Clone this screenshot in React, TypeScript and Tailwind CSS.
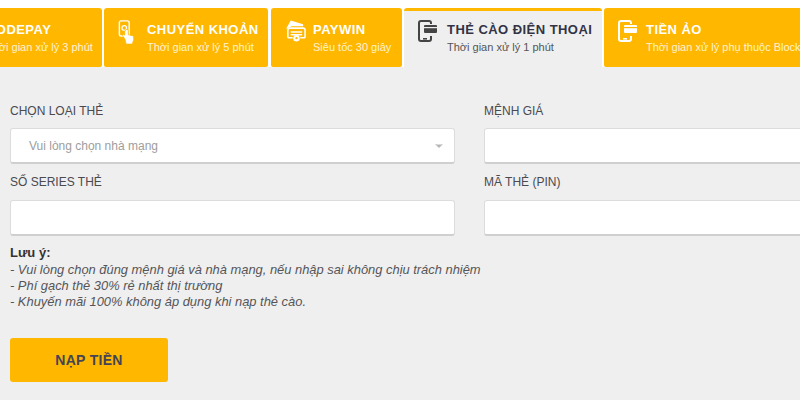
import { ChevronDown } from "lucide-react"

const font = "font-['Liberation_Sans',Arial,sans-serif]"

function HandIcon() {
    return (
        <svg width="17" height="25" viewBox="0 0 18 28" fill="none">
            <rect x="1" y="1" width="11" height="17" rx="2" stroke="#fff" strokeWidth="1.6" />
            <circle cx="6.5" cy="9" r="2.6" stroke="#fff" strokeWidth="1.4" />
            <path d="M7 12v5l-1.5-1-1 1 3 5 1 5h7l1.5-5v-4l-6-1.5V12a1.2 1.2 0 0 0-3 0Z" fill="#fff" stroke="#ffb700" strokeWidth="0.8" />
        </svg>
    )
}

function WalletIcon() {
    return (
        <svg width="21" height="24" viewBox="0 0 22 24" fill="none">
            <path d="M1 10 6 1l13 4v2H7Z" fill="#fff" />
            <path d="M3 19V11a2 2 0 0 1 2-2h14a2 2 0 0 1 2 2v8" stroke="#fff" strokeWidth="1.6" />
            <path d="M6 13h12M6 16h12" stroke="#fff" strokeWidth="1.6" />
            <path d="M3 19h5M16 19h5" stroke="#fff" strokeWidth="1.6" />
            <circle cx="12" cy="19.5" r="3.4" fill="#fff" />
            <circle cx="12" cy="19.5" r="1.2" fill="#ffb700" />
        </svg>
    )
}

function PhoneCardIcon({ color, bg }: { color: string; bg: string }) {
    return (
        <svg width="19" height="22" viewBox="0 0 19 22" fill="none">
            <path d="M13 4V3a2 2 0 0 0-2-2H3a2 2 0 0 0-2 2v16a2 2 0 0 0 2 2h8a2 2 0 0 0 2-2v-3" stroke={color} strokeWidth="2" />
            <rect x="6" y="5" width="13" height="8" rx="1" fill={color} />
            <rect x="6" y="7" width="13" height="1.2" fill={bg} />
            <rect x="5" y="18" width="4" height="1.6" fill={color} />
        </svg>
    )
}

function Tab({ icon, title, sub, className, active }: { icon?: React.ReactNode; title: string; sub: string; className: string; active?: boolean }) {
    return (
        <div className={`flex shrink-0 items-start rounded-t-[3px] h-[59px] ${active ? "bg-[#efefef] border-t-[3px] border-[#ffb700] pt-[8px]" : "bg-[#ffb700] rounded-b-[2px] pt-[11px]"} ${className}`}>
            {icon}
            <div className="mt-[2px]">
                <div className={`text-[13px] leading-[17px] font-bold tracking-[0.45px] ${active ? "text-[#333344]" : "text-white"}`}>{title}</div>
                <div className={`text-[11px] leading-[14px] mt-[2px] whitespace-nowrap ${active ? "text-[#555]" : "text-[#fff3d0]"}`}>{sub}</div>
            </div>
        </div>
    )
}

function Field({ label, children }: { label: string; children: React.ReactNode }) {
    return (
        <div className="w-[445px] shrink-0">
            <div className="text-[12px] leading-[14px] text-[#4a4a50] mb-[10px]">{label}</div>
            {children}
        </div>
    )
}

const boxClass = "h-[36px] w-full bg-white rounded-[3px] border border-[#dcdcdc] border-b-2 border-b-[#cfcfcf]"

export default function App() {
    return (
        <main className={`h-[400px] w-[800px] overflow-hidden bg-[#efefef] ${font}`}>
            <div className="bg-white pt-[8px] h-[67px]">
                <div className="flex -ml-[48px] w-[1100px]">
                    <Tab className="w-[150px] pl-[34px] mr-[2px] overflow-hidden" title="CODEPAY" sub="Thời gian xử lý 3 phút" />
                    <Tab
                        className="w-[164px] pl-[14px] mr-[3px]"
                        icon={<div className="w-[29px] mt-[1px]"><HandIcon /></div>}
                        title="CHUYỂN KHOẢN"
                        sub="Thời gian xử lý 5 phút"
                    />
                    <Tab
                        className="w-[131px] pl-[14px] mr-[2px]"
                        icon={<div className="w-[28px]"><WalletIcon /></div>}
                        title="PAYWIN"
                        sub="Siêu tốc 30 giây"
                    />
                    <Tab
                        active
                        className="w-[198px] pl-[14px] mr-[2px] h-[60px]"
                        icon={<div className="w-[29px] pt-[1px]"><PhoneCardIcon color="#444" bg="#efefef" /></div>}
                        title="THẺ CÀO ĐIỆN THOẠI"
                        sub="Thời gian xử lý 1 phút"
                    />
                    <Tab
                        className="w-[300px] pl-[14px]"
                        icon={<div className="w-[28px] pt-[1px]"><PhoneCardIcon color="#fff" bg="#ffb700" /></div>}
                        title="TIỀN ẢO"
                        sub="Thời gian xử lý phụ thuộc Blockchain"
                    />
                </div>
            </div>

            <div className="pl-[10px] pt-[37px]">
                <div className="flex gap-[29px]">
                    <Field label="CHỌN LOẠI THẺ">
                        <div className={`${boxClass} flex items-center justify-between pl-[18px] pr-[9px]`}>
                            <span className="text-[12px] text-[#9d9d9d]">Vui lòng chọn nhà mạng</span>
                            <ChevronDown size={12} className="text-[#b5b5b5] fill-[#b5b5b5]" />
                        </div>
                    </Field>
                    <Field label="MỆNH GIÁ">
                        <div className={boxClass} />
                    </Field>
                </div>
                <div className="flex gap-[29px] mt-[11px]">
                    <Field label="SỐ SERIES THẺ">
                        <div className={`${boxClass} mt-[11px]`} />
                    </Field>
                    <Field label="MÃ THẺ (PIN)">
                        <div className={`${boxClass} mt-[11px]`} />
                    </Field>
                </div>

                <div className="mt-[9px] text-[12.9px] leading-[16px] text-[#555558]">
                    <div className="font-bold text-[13px] text-[#333] mb-[1px]">Lưu ý:</div>
                    <div className="italic">- Vui lòng chọn đúng mệnh giá và nhà mạng, nếu nhập sai không chịu trách nhiệm</div>
                    <div className="italic">- Phí gạch thẻ 30% rẻ nhất thị trường</div>
                    <div className="italic">- Khuyến mãi 100% không áp dụng khi nạp thẻ cào.</div>
                </div>

                <button className="mt-[28px] flex h-[44px] w-[158px] items-center justify-center rounded-[3px] bg-[#ffb700] text-[14px] font-bold tracking-[0.3px] text-[#444455]">
                    NẠP TIỀN
                </button>
            </div>
        </main>
    )
}
